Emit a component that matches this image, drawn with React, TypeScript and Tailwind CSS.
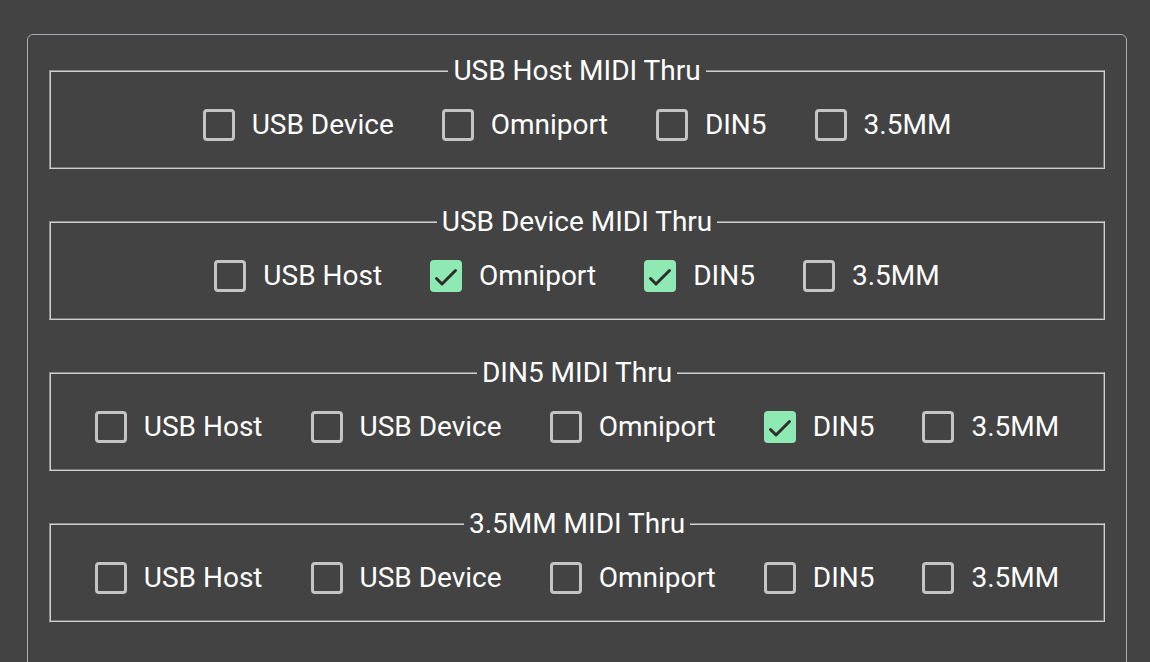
import React from "react";

type Opt = { label: string; checked?: boolean };

const groups: { title: string; options: Opt[] }[] = [
  {
    title: "USB Host MIDI Thru",
    options: [{ label: "USB Device" }, { label: "Omniport" }, { label: "DIN5" }, { label: "3.5MM" }],
  },
  {
    title: "USB Device MIDI Thru",
    options: [
      { label: "USB Host" },
      { label: "Omniport", checked: true },
      { label: "DIN5", checked: true },
      { label: "3.5MM" },
    ],
  },
  {
    title: "DIN5 MIDI Thru",
    options: [
      { label: "USB Host" },
      { label: "USB Device" },
      { label: "Omniport" },
      { label: "DIN5", checked: true },
      { label: "3.5MM" },
    ],
  },
  {
    title: "3.5MM MIDI Thru",
    options: [
      { label: "USB Host" },
      { label: "USB Device" },
      { label: "Omniport" },
      { label: "DIN5" },
      { label: "3.5MM" },
    ],
  },
];

function Box({ checked }: { checked?: boolean }) {
  if (checked) {
    return (
      <span className="flex h-8 w-8 shrink-0 items-center justify-center rounded-[4px] bg-[#8fe9b2]">
        <svg width="32" height="32" viewBox="0 0 32 32" fill="none">
          <path d="M6.5 18.5L12 24L25.5 10.5" stroke="#2e2e2e" strokeWidth="3" strokeLinecap="round" strokeLinejoin="round" />
        </svg>
      </span>
    );
  }
  return <span className="block h-8 w-8 shrink-0 rounded-[4px] border-[3px] border-[#c4c4c4]" />;
}

export default function App() {
  return (
    <div className="min-h-screen bg-[#434343] pt-[34px] font-['Roboto',sans-serif] text-white">
      <div className="ml-[27px] flex w-[1100px] flex-col gap-[36px] rounded-[6px] border border-[#a8acb4] px-[21px] pt-[19px] pb-[60px]">
        {groups.map((g) => (
          <fieldset
            key={g.title}
            className="m-0 border border-t-[#8e8e8e] border-l-[#8e8e8e] border-r-[#cfcfcf] border-b-[#cfcfcf] px-0 pt-[21px] pb-[27px] shadow-[inset_1px_1px_0_#cfcfcf,inset_-1px_-1px_0_#7a7a7a]"
          >
            <legend className="mx-auto bg-[#434343] px-[5px] text-[28px] leading-[33px]">{g.title}</legend>
            <div className="flex items-center justify-center gap-[48px]">
              {g.options.map((o, i) => (
                <label key={i} className="flex items-center gap-[17px] text-[28px] leading-[33px]">
                  <Box checked={o.checked} />
                  <span>{o.label}</span>
                </label>
              ))}
            </div>
          </fieldset>
        ))}
      </div>
    </div>
  );
}
